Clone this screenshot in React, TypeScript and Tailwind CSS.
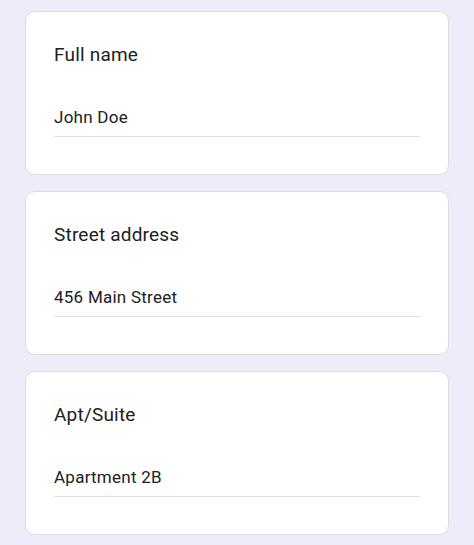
import React from "react";

const fields = [
  { label: "Full name", value: "John Doe" },
  { label: "Street address", value: "456 Main Street" },
  { label: "Apt/Suite", value: "Apartment 2B" },
];

export default function App() {
  return (
    <div
      className="min-h-[545px] bg-[#f0ebf8] px-[25px] pt-[11px] pb-[10px] flex flex-col gap-[16px]"
      style={{ fontFamily: "Roboto, 'Noto Sans', sans-serif" }}
    >
      {fields.map((f) => (
        <div
          key={f.label}
          className="bg-white border border-[#dadce0] rounded-[10px] pt-[31px] pb-[37px] px-[28px]"
        >
          <div className="text-[19px] leading-[24px] tracking-[0.2px] text-[#202124]">{f.label}</div>
          <div className="mt-[38px] text-[17px] leading-[24px] tracking-[0.25px] text-[#202124] pb-[7px] border-b border-[#e0e0e0]">
            {f.value}
          </div>
        </div>
      ))}
    </div>
  );
}
